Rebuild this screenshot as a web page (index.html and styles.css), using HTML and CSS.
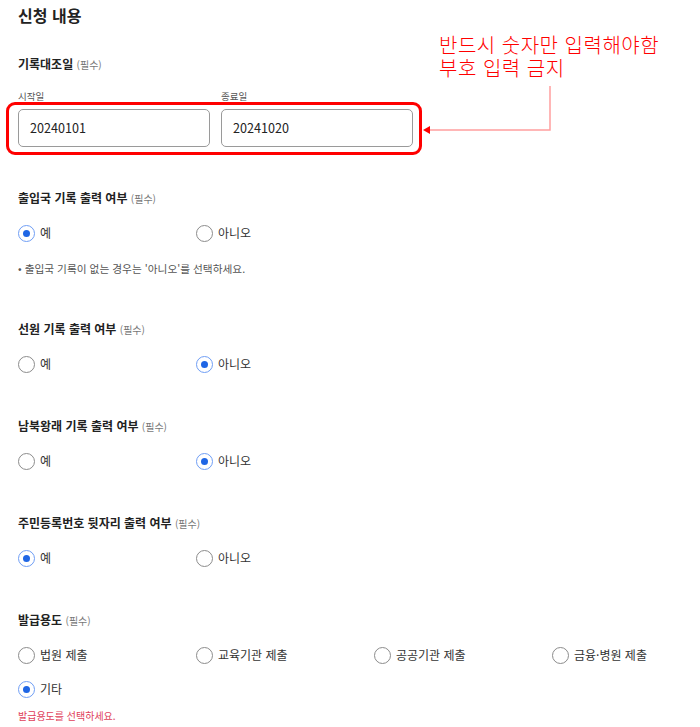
FILE: index.html
```html
<!DOCTYPE html>
<html lang="ko">
<head>
<meta charset="utf-8">
<title>신청 내용</title>
<link rel="stylesheet" href="styles.css">
</head>
<body>
<div class="page">
  <h1 class="title">신청 내용</h1>

  <div class="date-section">
    <div class="field-label">기록대조일 <span class="req">(필수)</span></div>
    <div class="date-grid">
      <div class="date-col">
        <div class="sub-label">시작일</div>
        <div class="input">20240101</div>
      </div>
      <div class="date-col">
        <div class="sub-label">종료일</div>
        <div class="input">20241020</div>
      </div>
    </div>
    <div class="highlight"></div>
    <div class="note-callout">반드시 숫자만 입력해야함<br>부호 입력 금지</div>
    <svg class="arrow" width="140" height="60" viewBox="0 0 140 60">
      <polyline points="127,0 127,44 6,44" fill="none" stroke="#ff9f9f" stroke-width="1.5"/>
      <polygon points="0,44 7,40 7,48" fill="#ff0000"/>
    </svg>
  </div>

  <div class="section first">
    <div class="field-label">출입국 기록 출력 여부 <span class="req">(필수)</span></div>
    <div class="options">
      <div class="opt"><span class="radio on"></span>예</div>
      <div class="opt"><span class="radio"></span>아니오</div>
    </div>
    <div class="hint">• 출입국 기록이 없는 경우는 '아니오'를 선택하세요.</div>
  </div>

  <div class="section">
    <div class="field-label">선원 기록 출력 여부 <span class="req">(필수)</span></div>
    <div class="options">
      <div class="opt"><span class="radio"></span>예</div>
      <div class="opt"><span class="radio on"></span>아니오</div>
    </div>
  </div>

  <div class="section">
    <div class="field-label">남북왕래 기록 출력 여부 <span class="req">(필수)</span></div>
    <div class="options">
      <div class="opt"><span class="radio"></span>예</div>
      <div class="opt"><span class="radio on"></span>아니오</div>
    </div>
  </div>

  <div class="section">
    <div class="field-label">주민등록번호 뒷자리 출력 여부 <span class="req">(필수)</span></div>
    <div class="options">
      <div class="opt"><span class="radio on"></span>예</div>
      <div class="opt"><span class="radio"></span>아니오</div>
    </div>
  </div>

  <div class="section">
    <div class="field-label">발급용도 <span class="req">(필수)</span></div>
    <div class="options multi">
      <div class="opt"><span class="radio"></span>법원 제출</div>
      <div class="opt"><span class="radio"></span>교육기관 제출</div>
      <div class="opt"><span class="radio"></span>공공기관 제출</div>
      <div class="opt"><span class="radio"></span>금융·병원 제출</div>
      <div class="opt"><span class="radio on"></span>기타</div>
    </div>
    <div class="error">발급용도를 선택하세요.</div>
  </div>
</div>
</body>
</html>
```

FILE: styles.css
```css
* { box-sizing: border-box; }
html, body { margin: 0; padding: 0; background: #fff; }
body {
  font-family: "Noto Sans CJK KR", "Noto Sans", sans-serif;
  color: #222;
}
.page {
  padding: 3px 0 0 18px;
  width: 700px;
}
.title {
  margin: 0;
  font-size: 16px;
  line-height: 24px;
  font-weight: 700;
  color: #222;
}
.date-section {
  position: relative;
  margin-top: 27px;
}
.field-label {
  width: max-content;
  height: 20px;
  font-size: 12px;
  line-height: 20px;
  font-weight: 700;
  color: #222;
}
.req {
  font-size: 10px;
  line-height: 1;
  font-weight: 400;
  color: #777;
}
.date-grid {
  display: flex;
  gap: 11px;
  margin-top: 15px;
}
.date-col { width: 192px; }
.sub-label {
  height: 14px;
  font-size: 9.5px;
  line-height: 14px;
  color: #555;
}
.input {
  margin-top: 6px;
  height: 38px;
  border: 1px solid #9a9a9a;
  border-radius: 5px;
  padding: 0 11px;
  font-size: 12.6px;
  line-height: 36px;
  color: #222;
}
.highlight {
  position: absolute;
  left: -12px;
  top: 48px;
  width: 416px;
  height: 53px;
  border: 3px solid #ff0000;
  border-radius: 9px;
}
.note-callout {
  position: absolute;
  left: 421px;
  top: -21px;
  font-size: 20px;
  font-weight: 300;
  letter-spacing: 0.5px;
  line-height: 23px;
  color: #ff0000;
  white-space: nowrap;
}
.arrow {
  position: absolute;
  left: 405px;
  top: 32px;
}
.section { margin-top: 42px; }
.section.first { margin-top: 41px; }
.options {
  display: grid;
  grid-template-columns: repeat(4, 178px);
  row-gap: 14px;
  margin-top: 15px;
}
.opt {
  display: flex;
  align-items: center;
  height: 20px;
  font-size: 12px;
  line-height: 20px;
  color: #333;
}
.radio {
  width: 17px;
  height: 17px;
  border: 1.5px solid #8c8c8c;
  border-radius: 50%;
  margin-right: 5px;
  flex: none;
  display: flex;
  align-items: center;
  justify-content: center;
}
.radio.on { border-color: #6f9ef5; }
.radio.on::after {
  content: "";
  width: 7px;
  height: 7px;
  border-radius: 50%;
  background: #1f66e5;
}
.hint {
  margin-top: 18px;
  margin-bottom: 1px;
  font-size: 10.7px;
  line-height: 16px;
  height: 16px;
  color: #555;
}
.error {
  margin-top: 9px;
  font-size: 10px;
  line-height: 16px;
  height: 16px;
  color: #e0405a;
}
```
